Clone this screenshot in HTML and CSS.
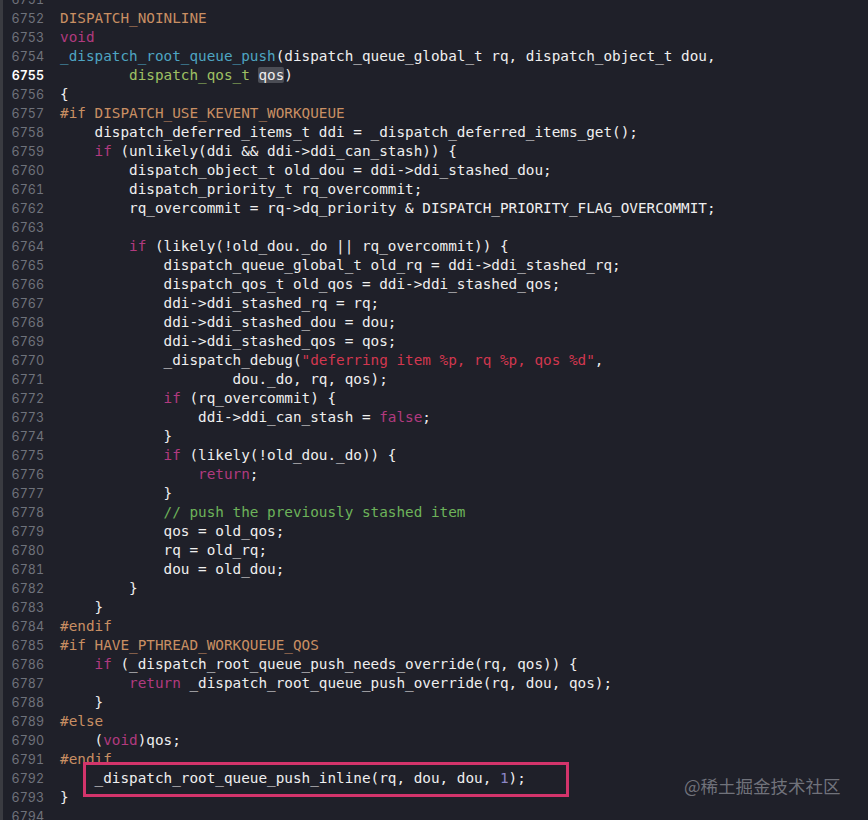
FILE: index.html
```html
<!DOCTYPE html>
<html lang="en">
<head>
    <meta charset="UTF-8">
    <title>queue.c</title>
    <link rel="stylesheet" href="styles.css">
</head>
<body>
    <div class="editor">
        <div class="line"><span class="num">6751</span><span class="code"></span></div>
        <div class="line"><span class="num">6752</span><span class="code"><span class="pp">DISPATCH_NOINLINE</span></span></div>
        <div class="line"><span class="num">6753</span><span class="code"><span class="kw">void</span></span></div>
        <div class="line"><span class="num">6754</span><span class="code"><span class="fn">_dispatch_root_queue_push</span>(dispatch_queue_global_t rq, dispatch_object_t dou,</span></div>
        <div class="line current"><span class="num">6755</span><span class="code">        <span class="ty">dispatch_qos_t</span> <span class="sel">qos</span>)</span></div>
        <div class="line"><span class="num">6756</span><span class="code">{</span></div>
        <div class="line"><span class="num">6757</span><span class="code"><span class="pp">#if DISPATCH_USE_KEVENT_WORKQUEUE</span></span></div>
        <div class="line"><span class="num">6758</span><span class="code">    dispatch_deferred_items_t ddi = _dispatch_deferred_items_get();</span></div>
        <div class="line"><span class="num">6759</span><span class="code">    <span class="kw">if</span> (unlikely(ddi &amp;&amp; ddi-&gt;ddi_can_stash)) {</span></div>
        <div class="line"><span class="num">6760</span><span class="code">        dispatch_object_t old_dou = ddi-&gt;ddi_stashed_dou;</span></div>
        <div class="line"><span class="num">6761</span><span class="code">        dispatch_priority_t rq_overcommit;</span></div>
        <div class="line"><span class="num">6762</span><span class="code">        rq_overcommit = rq-&gt;dq_priority &amp; DISPATCH_PRIORITY_FLAG_OVERCOMMIT;</span></div>
        <div class="line"><span class="num">6763</span><span class="code"></span></div>
        <div class="line"><span class="num">6764</span><span class="code">        <span class="kw">if</span> (likely(!old_dou._do || rq_overcommit)) {</span></div>
        <div class="line"><span class="num">6765</span><span class="code">            dispatch_queue_global_t old_rq = ddi-&gt;ddi_stashed_rq;</span></div>
        <div class="line"><span class="num">6766</span><span class="code">            dispatch_qos_t old_qos = ddi-&gt;ddi_stashed_qos;</span></div>
        <div class="line"><span class="num">6767</span><span class="code">            ddi-&gt;ddi_stashed_rq = rq;</span></div>
        <div class="line"><span class="num">6768</span><span class="code">            ddi-&gt;ddi_stashed_dou = dou;</span></div>
        <div class="line"><span class="num">6769</span><span class="code">            ddi-&gt;ddi_stashed_qos = qos;</span></div>
        <div class="line"><span class="num">6770</span><span class="code">            _dispatch_debug(<span class="str">"deferring item %p, rq %p, qos %d"</span>,</span></div>
        <div class="line"><span class="num">6771</span><span class="code">                    dou._do, rq, qos);</span></div>
        <div class="line"><span class="num">6772</span><span class="code">            <span class="kw">if</span> (rq_overcommit) {</span></div>
        <div class="line"><span class="num">6773</span><span class="code">                ddi-&gt;ddi_can_stash = <span class="kw">false</span>;</span></div>
        <div class="line"><span class="num">6774</span><span class="code">            }</span></div>
        <div class="line"><span class="num">6775</span><span class="code">            <span class="kw">if</span> (likely(!old_dou._do)) {</span></div>
        <div class="line"><span class="num">6776</span><span class="code">                <span class="kw">return</span>;</span></div>
        <div class="line"><span class="num">6777</span><span class="code">            }</span></div>
        <div class="line"><span class="num">6778</span><span class="code">            <span class="cm">// push the previously stashed item</span></span></div>
        <div class="line"><span class="num">6779</span><span class="code">            qos = old_qos;</span></div>
        <div class="line"><span class="num">6780</span><span class="code">            rq = old_rq;</span></div>
        <div class="line"><span class="num">6781</span><span class="code">            dou = old_dou;</span></div>
        <div class="line"><span class="num">6782</span><span class="code">        }</span></div>
        <div class="line"><span class="num">6783</span><span class="code">    }</span></div>
        <div class="line"><span class="num">6784</span><span class="code"><span class="pp">#endif</span></span></div>
        <div class="line"><span class="num">6785</span><span class="code"><span class="pp">#if HAVE_PTHREAD_WORKQUEUE_QOS</span></span></div>
        <div class="line"><span class="num">6786</span><span class="code">    <span class="kw">if</span> (_dispatch_root_queue_push_needs_override(rq, qos)) {</span></div>
        <div class="line"><span class="num">6787</span><span class="code">        <span class="kw">return</span> _dispatch_root_queue_push_override(rq, dou, qos);</span></div>
        <div class="line"><span class="num">6788</span><span class="code">    }</span></div>
        <div class="line"><span class="num">6789</span><span class="code"><span class="pp">#else</span></span></div>
        <div class="line"><span class="num">6790</span><span class="code">    (<span class="kw">void</span>)qos;</span></div>
        <div class="line"><span class="num">6791</span><span class="code"><span class="pp">#endif</span></span></div>
        <div class="line marked"><span class="num">6792</span><span class="code">    _dispatch_root_queue_push_inline(rq, dou, dou, <span class="nb">1</span>);</span><span class="mark-box"></span></div>
        <div class="line"><span class="num">6793</span><span class="code">}</span></div>
        <div class="line"><span class="num">6794</span><span class="code"></span></div>
    </div>

    <div class="watermark">@稀土掘金技术社区</div>
</body>
</html>
```

FILE: styles.css
```css
body {
    margin: 0;
    height: 820px;
    overflow: hidden;
    background-color: #1f2029;
    border-left: 3px solid #3a3b41;
    position: relative;
}

.editor {
    margin-top: -10px;
}

.line {
    display: flex;
    height: 19px;
    line-height: 19px;
}

.num {
    width: 41px;
    text-align: right;
    font-family: Inter, "Noto Sans", sans-serif;
    font-size: 12.5px;
    font-variant-numeric: tabular-nums;
    color: #6f727b;
}

.current .num {
    color: #ffffff;
    font-weight: 600;
}

.code {
    margin-left: 16px;
    white-space: pre;
    font-family: "DejaVu Sans Mono", monospace;
    font-size: 14.33px;
    color: #efefef;
}

.pp { color: #c98f63; }
.kw { color: #b13a7f; }
.fn { color: #4ea5c2; }
.ty { color: #9fc064; }
.cm { color: #6db35a; }
.str { color: #d2374f; }
.nb { color: #8c86c6; }

.sel {
    background-color: #4b4d55;
    border-radius: 2px;
}

.marked {
    position: relative;
}

.mark-box {
    position: absolute;
    left: 80px;
    top: -7px;
    width: 480px;
    height: 29px;
    border: 3px solid #d3346b;
}

.watermark {
    position: absolute;
    left: 681px;
    top: 773px;
    font-family: "Noto Sans CJK SC", sans-serif;
    font-size: 17.5px;
    color: rgba(150, 152, 160, 0.7);
}
```
